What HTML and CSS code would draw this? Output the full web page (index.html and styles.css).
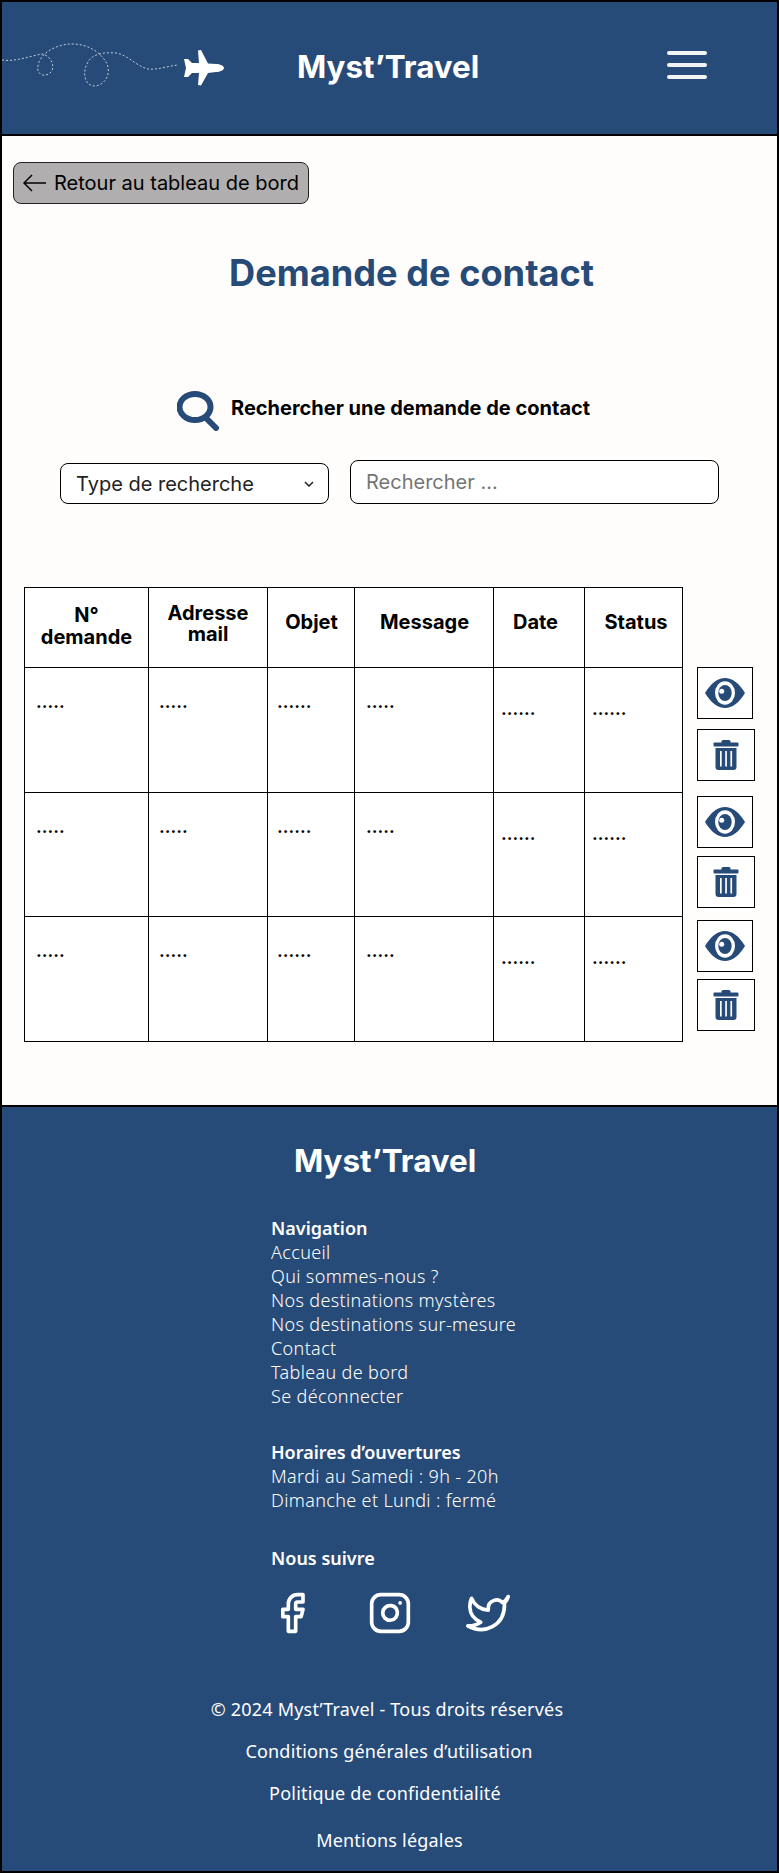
FILE: index.html
```html
<!DOCTYPE html>
<html lang="fr">
  <head>
    <meta charset="UTF-8" />
    <meta name="viewport" content="width=device-width, initial-scale=1.0" />
    <title>Demande de contact</title>
    <link rel="stylesheet" href="styles.css">
  </head>
  <body>
    <div class="page">
      <header class="header">
        <svg class="plane" width="223" height="70" viewBox="2 30 223 70">
          <path class="trail" d="M2 60C15 62 30 56 42 54C52 56 56 68 50 73C44 78 36 74 38 66C40 52 58 44 72 44C88 44 100 52 106 62C112 72 106 85 95 86C84 86 82 72 88 62C92 54 104 52 116 53C128 55 136 66 148 69C158 70 168 66 178 65"/>
          <path class="jet" d="M224 68C224 66 220 64 216 64L208 63.500L201 50L198 50.500L199 63L192 63L188 59L184 59L186 68L184 77L188 77L192 73L199 73L198 85L201 85.500L208 73L216 72C220 72 224 70 224 68Z"/>
        </svg>
        <span class="logo">Myst’Travel</span>
        <button class="burger" type="button" aria-label="Menu">
          <span></span>
          <span></span>
          <span></span>
        </button>
      </header>

      <main class="main">
        <a class="back" href="#">
          <svg width="24" height="18" viewBox="0 0 24 18">
            <path d="M23 9H1M9 1L1 9L9 17"/>
          </svg>
          Retour au tableau de bord
        </a>

        <h1 class="title">Demande de contact</h1>

        <div class="search-head">
          <svg width="43" height="40" viewBox="0 0 43 40">
            <ellipse cx="18" cy="16" rx="15.500" ry="13"/>
            <path d="M29 27L39 37"/>
          </svg>
          <h2>Rechercher une demande de contact</h2>
        </div>

        <form class="search-form">
          <div class="select-wrap">
            <select class="search-type">
              <option>Type de recherche</option>
            </select>
            <svg class="chevron" width="10" height="6" viewBox="0 0 10 6">
              <path d="M1 1L5 5L9 1"/>
            </svg>
          </div>
          <input class="search-input" type="text" placeholder="Rechercher ..." />
        </form>

        <div class="board">
          <table class="requests">
            <colgroup>
              <col class="c-num" />
              <col class="c-mail" />
              <col class="c-obj" />
              <col class="c-msg" />
              <col class="c-date" />
              <col class="c-status" />
            </colgroup>
            <thead>
              <tr>
                <th>N°<br />demande</th>
                <th class="tight">Adresse<br />mail</th>
                <th class="single">Objet</th>
                <th class="single">Message</th>
                <th class="single th-date">Date</th>
                <th class="single th-status">Status</th>
              </tr>
            </thead>
            <tbody>
              <tr>
                <td>.....</td>
                <td>.....</td>
                <td>......</td>
                <td>.....</td>
                <td class="low">......</td>
                <td class="low">......</td>
              </tr>
              <tr>
                <td>.....</td>
                <td>.....</td>
                <td>......</td>
                <td>.....</td>
                <td class="low">......</td>
                <td class="low">......</td>
              </tr>
              <tr>
                <td>.....</td>
                <td>.....</td>
                <td>......</td>
                <td>.....</td>
                <td class="low">......</td>
                <td class="low">......</td>
              </tr>
            </tbody>
          </table>

          <div class="actions">
            <div class="action-group first">
              <button class="btn-eye" type="button" aria-label="Voir">
                <svg width="40" height="30" viewBox="0 0 40 30"><use href="#eye"/></svg>
              </button>
              <button class="btn-trash" type="button" aria-label="Supprimer">
                <svg width="26" height="30" viewBox="0 0 25 30"><use href="#trash"/></svg>
              </button>
            </div>
            <div class="action-group second">
              <button class="btn-eye" type="button" aria-label="Voir">
                <svg width="40" height="30" viewBox="0 0 40 30"><use href="#eye"/></svg>
              </button>
              <button class="btn-trash" type="button" aria-label="Supprimer">
                <svg width="26" height="30" viewBox="0 0 25 30"><use href="#trash"/></svg>
              </button>
            </div>
            <div class="action-group third">
              <button class="btn-eye" type="button" aria-label="Voir">
                <svg width="40" height="30" viewBox="0 0 40 30"><use href="#eye"/></svg>
              </button>
              <button class="btn-trash" type="button" aria-label="Supprimer">
                <svg width="26" height="30" viewBox="0 0 25 30"><use href="#trash"/></svg>
              </button>
            </div>
          </div>
        </div>
      </main>

      <footer class="footer">
        <div class="footer-logo">Myst’Travel</div>

        <div class="footer-cols">
          <section class="footer-block">
            <h3>Navigation</h3>
            <a href="#">Accueil</a>
            <a href="#">Qui sommes-nous ?</a>
            <a href="#">Nos destinations mystères</a>
            <a href="#">Nos destinations sur-mesure</a>
            <a href="#">Contact</a>
            <a href="#">Tableau de bord</a>
            <a href="#">Se déconnecter</a>
          </section>

          <section class="footer-block hours">
            <h3>Horaires d’ouvertures</h3>
            <p>Mardi au Samedi : 9h - 20h</p>
            <p>Dimanche et Lundi : fermé</p>
          </section>

          <section class="footer-block">
            <h3>Nous suivre</h3>
            <div class="socials">
              <svg width="44" height="44" viewBox="0 0 24 24">
                <path d="M18 2h-3a5 5 0 0 0-5 5v3H7v4h3v8h4v-8h3l1-4h-4V7a1 1 0 0 1 1-1h3z"/>
              </svg>
              <svg width="44" height="44" viewBox="0 0 24 24">
                <rect x="2" y="2" width="20" height="20" rx="5"/>
                <path d="M16 11.370A4 4 0 1 1 12.630 8 4 4 0 0 1 16 11.370z"/>
                <path d="M17.500 6.500h.01"/>
              </svg>
              <svg width="44" height="44" viewBox="0 0 24 24">
                <path d="M23 3a10.900 10.900 0 0 1-3 3.500 4.480 4.480 0 0 0-7.860 3v1A10.660 10.660 0 0 1 3 4s-4 9 5 13a11.640 11.640 0 0 1-7 2c9 5 20 0 20-11.500a4.500 4.500 0 0 0-.08-.83A7.720 7.720 0 0 0 23 3z"/>
              </svg>
            </div>
          </section>
        </div>

        <div class="legal">
          <p>© 2024 Myst’Travel - Tous droits réservés</p>
          <a class="cgu" href="#">Conditions générales d’utilisation</a>
          <a class="privacy" href="#">Politique de confidentialité</a>
          <a class="last" href="#">Mentions légales</a>
        </div>
      </footer>
    </div>

    <svg class="defs" width="0" height="0">
      <defs>
        <g id="eye">
          <path fill="#274b78" d="M0 15C6 5 13 0 20 0C27 0 34 5 40 15C34 25 27 30 20 30C13 30 6 25 0 15Z"/>
          <ellipse fill="#fff" cx="20" cy="15" rx="10" ry="11.700"/>
          <ellipse fill="#274b78" cx="20" cy="15" rx="6.700" ry="8"/>
          <circle fill="#fff" cx="16.700" cy="13.300" r="2.500"/>
        </g>
        <g id="trash" fill="#274b78">
          <rect x="8" y="0" width="9" height="4" rx="1.500"/>
          <rect x="0" y="2.500" width="25" height="4" rx="1"/>
          <path fill-rule="evenodd" d="M2 8H23V27A3 3 0 0 1 20 30H5A3 3 0 0 1 2 27ZM6.500 11V26.500H8.200V11ZM11.700 11V26.500H13.400V11ZM16.900 11V26.500H18.600V11Z"/>
        </g>
      </defs>
    </svg>
  </body>
</html>
```

FILE: styles.css
```css
* {
  box-sizing: border-box;
}
body {
  margin: 0;
  font-family: Inter, "Liberation Sans", sans-serif;
  color: #000;
}
a {
  color: inherit;
  text-decoration: none;
}
.defs {
  position: absolute;
}
.page {
  width: 779px;
  height: 1873px;
  border: 2px solid #000;
  background: #fffdfb;
  display: flex;
  flex-direction: column;
}

/* header */
.header {
  height: 134px;
  background: #274b78;
  border-bottom: 2px solid #000;
  display: flex;
  align-items: flex-start;
  color: #fff;
  flex-shrink: 0;
}
.plane {
  margin-top: 28px;
  flex-shrink: 0;
}
.trail {
  fill: none;
  stroke: #c4ccd8;
  stroke-width: 1;
  stroke-dasharray: 2 2;
}
.jet {
  fill: #fff;
}
.logo {
  margin: 45px 0 0 72px;
  font-size: 31.400px;
  font-weight: 700;
  line-height: 40px;
}
.burger {
  margin: 49px 70px 0 auto;
  padding: 0;
  width: 40px;
  background: none;
  border: 0;
  display: flex;
  flex-direction: column;
  gap: 8px;
}
.burger span {
  height: 4px;
  background: #f3f3f3;
  border-radius: 2px;
}

/* contenu */
.main {
  height: 969px;
  flex-shrink: 0;
  padding: 26px 0 0 11px;
}
.back {
  width: 296px;
  height: 42px;
  background: #b0aeae;
  border: 1px solid #222;
  border-radius: 8px;
  display: flex;
  align-items: center;
  gap: 7px;
  padding-left: 9px;
  font-size: 20px;
  white-space: nowrap;
}
.back svg {
  flex-shrink: 0;
}
.back path {
  fill: none;
  stroke: #000;
  stroke-width: 1.500;
}
.title {
  margin: 47px 0 0;
  padding-left: 216px;
  font-size: 36.200px;
  line-height: 44px;
  font-weight: 700;
  color: #274b78;
}
.search-head {
  margin: 96px 0 0 164px;
  display: flex;
  align-items: center;
  gap: 11px;
}
.search-head svg {
  fill: none;
  stroke: #274b78;
  stroke-width: 6;
  stroke-linecap: round;
  flex-shrink: 0;
}
.search-head h2 {
  margin: 0 0 6px;
  font-size: 20px;
  font-weight: 700;
}
.search-form {
  margin: 29px 0 0 47px;
  display: flex;
  align-items: flex-end;
  gap: 21px;
}
.select-wrap {
  position: relative;
  width: 269px;
  height: 41px;
}
.search-type {
  width: 100%;
  height: 100%;
  padding-left: 15px;
  appearance: none;
  background: #fff;
  border: 1px solid #000;
  border-radius: 8px;
  font: 20px Inter, sans-serif;
  color: #222;
}
.chevron {
  position: absolute;
  right: 15px;
  top: 18px;
  fill: none;
  stroke: #222;
  stroke-width: 1.500;
}
.search-input {
  width: 369px;
  height: 44px;
  padding: 0 15px 1px;
  background: #fff;
  border: 1px solid #000;
  border-radius: 8px;
  font: 20px Inter, sans-serif;
}
.search-input::placeholder {
  color: #757575;
}
.board {
  margin: 83px 0 0 11px;
  display: flex;
  align-items: flex-start;
}
.requests {
  width: 659px;
  table-layout: fixed;
  border-collapse: collapse;
  background: #fff;
}
.c-num {
  width: 124px;
}
.c-mail {
  width: 119px;
}
.c-obj {
  width: 87px;
}
.c-msg {
  width: 139px;
}
.c-date {
  width: 91px;
}
.requests th,
.requests td {
  border: 1px solid #000;
  padding: 0;
}
.requests th {
  height: 80px;
  font-size: 20px;
  line-height: 22px;
  font-weight: 700;
  vertical-align: middle;
  padding-bottom: 4px;
}
.requests th.tight {
  line-height: 21px;
  padding-bottom: 7px;
}
.requests th.single {
  padding-bottom: 11px;
  padding-left: 1px;
}
.requests th.th-date {
  padding: 0 7px 11px 0;
}
.requests th.th-status {
  padding-left: 5px;
}
.requests td {
  height: 124.500px;
  vertical-align: top;
  padding: 24px 0 0 11px;
  font-size: 18px;
  line-height: 20px;
  font-weight: 600;
}
.requests td:nth-child(2) {
  padding-left: 10px;
}
.requests td:nth-child(3) {
  padding-left: 9px;
}
.requests td.low {
  padding: 31px 0 0 7px;
}

/* boutons de ligne */
.actions {
  margin: 80px 0 0 14px;
  display: flex;
  flex-direction: column;
}
.action-group {
  display: flex;
  flex-direction: column;
}
.action-group.first {
  gap: 10px;
}
.action-group.second {
  margin-top: 15px;
  gap: 8px;
}
.action-group.third {
  margin-top: 12px;
  gap: 7px;
}
.action-group button {
  padding: 0;
  background: #fff;
  border: 1px solid #000;
  height: 52px;
  display: flex;
  align-items: center;
  justify-content: center;
}
.btn-eye {
  width: 56px;
}
.btn-trash {
  width: 58px;
}

/* footer */
.footer {
  flex: 1;
  background: #274b78;
  border-top: 2px solid #000;
  color: #fff;
  font-family: "Noto Sans", sans-serif;
  font-size: 18px;
  line-height: 24px;
}
.footer-logo {
  margin: 34px 0 0 292px;
  font-family: Inter, sans-serif;
  font-size: 31.400px;
  line-height: 40px;
  font-weight: 700;
}
.footer-cols {
  margin: 35px 0 0 269px;
}
.footer-block {
  margin-bottom: 32px;
  display: flex;
  flex-direction: column;
  font-weight: 300;
  letter-spacing: .36px;
}
.footer-block.hours {
  margin-bottom: 34px;
}
.footer-block h3,
.footer-block p {
  margin: 0;
}
.footer-block h3 {
  font-size: 18px;
  font-weight: 600;
  letter-spacing: 0;
}
.socials {
  margin: 21px 0 0 -1px;
  display: flex;
  gap: 54px;
}
.socials svg {
  fill: none;
  stroke: #fff;
  stroke-width: 2;
  stroke-linecap: round;
  stroke-linejoin: round;
}
.legal {
  margin-top: 62px;
  display: flex;
  flex-direction: column;
  align-items: center;
  gap: 18px;
  letter-spacing: .2px;
}
.legal p {
  margin: 0 5px 0 0;
}
.legal .cgu {
  margin-right: 1px;
}
.legal .privacy {
  margin-right: 9px;
}
.legal .last {
  margin-top: 5px;
}
```
